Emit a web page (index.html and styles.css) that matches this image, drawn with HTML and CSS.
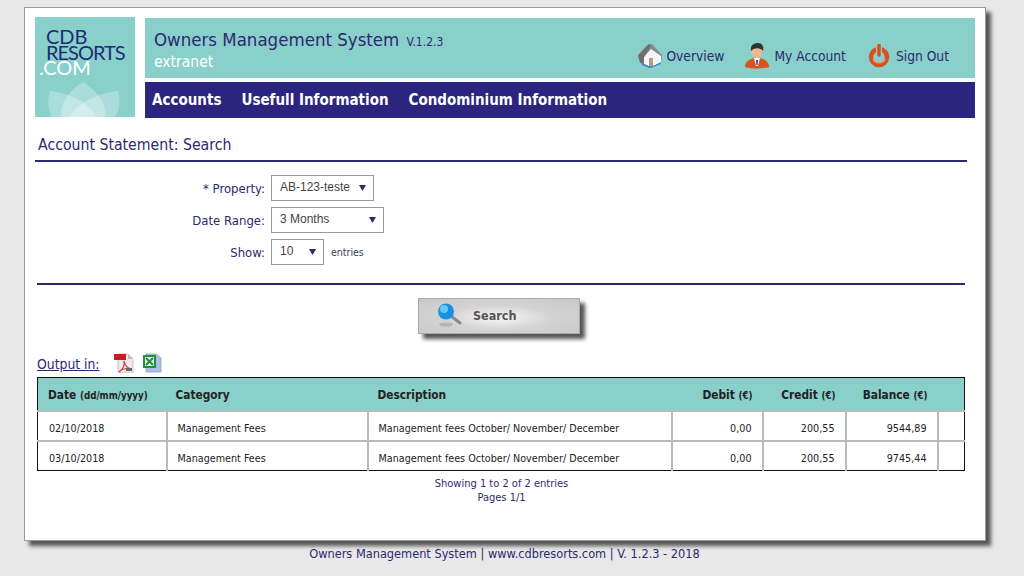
FILE: index.html
```html
<!DOCTYPE html>
<html lang="en">

<head>
  <meta charset="UTF-8">
  <meta name="viewport" content="width=device-width, initial-scale=1.0">
  <title>Owners Management System</title>
  <link rel="stylesheet" href="styles.css">
</head>

<body>
  <div class="sheet">
    <div class="top">
      <div class="logo">
        <div class="logo-text">
          <div>CDB</div>
          <div class="logo-resorts">RESORTS</div>
          <div class="logo-com">.COM</div>
        </div>
        <svg class="logo-petals" width="100" height="38" viewBox="0 0 100 38">
          <path d="M48 3 C36 10 24 24 26 38 H70 C72 24 60 10 48 3Z" fill="#fff" opacity=".28" />
          <path d="M15 12 C12 22 13 32 17 38 H62 C54 24 35 14 15 12Z" fill="#fff" opacity=".28" />
          <path d="M83 12 C86 22 85 32 79 38 H34 C42 24 63 14 83 12Z" fill="#fff" opacity=".28" />
        </svg>
      </div>
      <div class="top-right">
        <div class="banner">
          <div class="banner-title">
            <div class="system-name">Owners Management System <span class="version">V.1.2.3</span></div>
            <div class="extranet">extranet</div>
          </div>
          <div class="quick-links">
            <a class="quick-link link-overview">
              <svg width="26" height="26" viewBox="0 0 26 26">
                <path d="M1 13 L10 2 L15 1 L25 12 L24 20 L13 25 L3 20Z" fill="#8a8a8a" />
                <path d="M7 14 L14 6 L24 13 L24 20 L13 24 L7 21Z" fill="#f4f6f8" />
                <path d="M1 12 L12 1 L14 3 L7 14 L7 21 L3 19Z" fill="#6f6f6f" />
                <path d="M12 15 H16 V23 H12Z" fill="#b79a7a" />
                <path d="M5 20 L12 23 L16 23 L24 19 L24 21 L14 25 L12 25 L5 22Z" fill="#3d8ec4" />
              </svg>
              <span>Overview</span>
            </a>
            <a class="quick-link link-account">
              <svg width="24" height="26" viewBox="0 0 24 26">
                <path d="M0 24 C0 18 6 15 12 15 C18 15 24 18 24 24 C18 26 6 26 0 24Z" fill="#d9541a" />
                <path d="M9 15 H15 L13 23 H11Z" fill="#eef2f6" />
                <path d="M11 17 H13 L12.6 22 H11.4Z" fill="#2f4f7f" />
                <ellipse cx="12" cy="8" rx="5.5" ry="7" fill="#f0b68c" />
                <path d="M6 8 C5 2 9 0 13 0 C17 0 19 3 18 8 C16 5 10 4 6 8Z" fill="#2c3530" />
              </svg>
              <span>My Account</span>
            </a>
            <a class="quick-link link-signout">
              <svg width="22" height="24" viewBox="0 0 22 24">
                <circle cx="11" cy="13" r="8" fill="none" stroke="#d8501f" stroke-width="4.5" />
                <path d="M5 15 A6.5 6.5 0 0 0 17 15" fill="none" stroke="#f0a080" stroke-width="1.2" />
                <path d="M11 2 V11" stroke="#8acfca" stroke-width="6" />
                <path d="M11 1 V11" stroke="#d8501f" stroke-width="3.5" stroke-linecap="round" />
              </svg>
              <span>Sign Out</span>
            </a>
          </div>
        </div>
        <nav class="main-nav">
          <a>Accounts</a>
          <a>Usefull Information</a>
          <a>Condominium Information</a>
        </nav>
      </div>
    </div>

    <h1 class="page-title">Account Statement: Search</h1>

    <form class="search-form">
      <div class="form-row">
        <label class="form-label">* Property:</label>
        <select class="form-select select-property">
          <option>AB-123-teste</option>
        </select>
      </div>
      <div class="form-row">
        <label class="form-label">Date Range:</label>
        <select class="form-select select-range">
          <option>3 Months</option>
        </select>
      </div>
      <div class="form-row">
        <label class="form-label">Show:</label>
        <select class="form-select select-show">
          <option>10</option>
        </select>
        <span class="entries">entries</span>
      </div>
    </form>

    <div class="button-row">
      <button class="search-button" type="button">
        <svg width="26" height="26" viewBox="0 0 26 26">
          <ellipse cx="10" cy="22.5" rx="7" ry="2" fill="#b5b5b5" />
          <path d="M15 14 L24 21" stroke="#8b8b8b" stroke-width="3" stroke-linecap="round" />
          <circle cx="10" cy="9.5" r="8" fill="#1b8fe0" />
          <circle cx="8" cy="7" r="4" fill="#6cc6f7" />
        </svg>
        <span>Search</span>
      </button>
    </div>

    <div class="output-row">
      <a class="output-link">Output in:</a>
      <svg class="output-icon" width="20" height="20" viewBox="0 0 20 20">
        <path d="M4 1 H14 L19 6 V20 H4Z" fill="#eceaea" stroke="#aaa" stroke-width=".7" />
        <path d="M14 1 V6 H19Z" fill="#bdbdbd" />
        <path d="M10 8 C11 13 13 15 17 16 C13 15 8 16 5 19 C9 16 11 12 10 8Z" fill="none" stroke="#d33" stroke-width="1.2" />
        <rect x="0" y="1" width="12" height="6" fill="#d01c1c" />
        <rect x="12" y="15" width="6" height="3" fill="#666" />
      </svg>
      <svg class="output-icon" width="20" height="20" viewBox="0 0 20 20">
        <path d="M4 1 H14 L19 5 V19 H4Z" fill="#a9c0e2" stroke="#7f9bc4" stroke-width=".7" />
        <rect x="1" y="2" width="13" height="13" fill="#1f8f3f" />
        <rect x="3" y="4" width="9" height="9" fill="#e6f2e4" />
        <path d="M4 5 L11 12 M11 5 L4 12" stroke="#1f8f3f" stroke-width="2" />
      </svg>
    </div>

    <table class="statement">
      <colgroup>
        <col class="col-date">
        <col class="col-category">
        <col class="col-description">
        <col class="col-debit">
        <col class="col-credit">
        <col class="col-balance">
        <col>
      </colgroup>
      <thead>
        <tr>
          <th>Date <small>(dd/mm/yyyy)</small></th>
          <th class="th-category">Category</th>
          <th>Description</th>
          <th class="num">Debit <small>(€)</small></th>
          <th class="num">Credit <small>(€)</small></th>
          <th class="num">Balance <small>(€)</small></th>
          <th></th>
        </tr>
      </thead>
      <tbody>
        <tr>
          <td>02/10/2018</td>
          <td>Management Fees</td>
          <td>Management fees October/ November/ December</td>
          <td class="num">0,00</td>
          <td class="num">200,55</td>
          <td class="num">9544,89</td>
          <td></td>
        </tr>
        <tr>
          <td>03/10/2018</td>
          <td>Management Fees</td>
          <td>Management fees October/ November/ December</td>
          <td class="num">0,00</td>
          <td class="num">200,55</td>
          <td class="num">9745,44</td>
          <td></td>
        </tr>
      </tbody>
    </table>

    <div class="table-info">
      <div>Showing 1 to 2 of 2 entries</div>
      <div>Pages 1/1</div>
    </div>
  </div>

  <div class="page-footer">Owners Management System | www.cdbresorts.com | V. 1.2.3 - 2018</div>
</body>

</html>
```

FILE: styles.css
```css
* {
  box-sizing: border-box;
}

html,
body {
  height: 100%;
}

body {
  margin: 0;
  padding-top: 7px;
  background: #e8e8e8;
  color: #2b2a6f;
  font-family: "DejaVu Sans", sans-serif;
  font-stretch: condensed;
  overflow: hidden;
}

.sheet {
  width: 962px;
  height: 534px;
  margin-left: 24px;
  padding: 9px 10px 0 10px;
  background: #fff;
  border: 1px solid #999;
  box-shadow: 5px 5px 4px #555;
}

.top {
  display: flex;
  gap: 10px;
}

.logo {
  display: flex;
  flex-direction: column;
  justify-content: space-between;
  width: 100px;
  height: 100px;
  background: #89d0cb;
}

.logo-text {
  padding: 12px 0 0 11px;
  color: #1f2a78;
  font-family: "Lato", sans-serif;
  font-stretch: normal;
  font-size: 20px;
  line-height: 15.5px;
}

.logo-resorts {
  letter-spacing: -1px;
}

.logo-com {
  margin-left: -7px;
  color: #fff;
}

.logo-petals {
  display: block;
}

.top-right {
  flex: 1;
  padding-top: 1px;
}

.banner {
  display: flex;
  justify-content: space-between;
  height: 60px;
  background: #89d0cb;
  padding: 10px 26px 0 9px;
}

.system-name {
  font-size: 18.5px;
  line-height: 24px;
  white-space: nowrap;
}

.version {
  font-size: 12px;
  margin-left: 2px;
}

.extranet {
  color: #fff;
  font-size: 15.5px;
  line-height: 16px;
}

.quick-links {
  display: flex;
  align-items: center;
  gap: 21px;
  padding-top: 6px;
}

.quick-link {
  display: flex;
  align-items: center;
  font-size: 13.7px;
}

.link-overview svg {
  margin-right: 3px;
}

.link-account svg {
  margin-right: 5px;
}

.link-signout {
  margin-left: 1px;
}

.link-signout svg {
  margin-right: 6px;
}

.main-nav {
  display: flex;
  gap: 20px;
  align-items: center;
  height: 36px;
  margin-top: 4px;
  padding-left: 7px;
  background: #2b2580;
  color: #fff;
  font-size: 15px;
  font-weight: bold;
}

.page-title {
  margin: 17px 0 0 0;
  padding: 0 0 5px 3px;
  border-bottom: 2px solid #2b2a6f;
  width: 932px;
  font-size: 15.7px;
  font-weight: normal;
  line-height: 20px;
}

.search-form {
  width: 928px;
  height: 123px;
  margin-left: 2px;
  padding-top: 13px;
  border-bottom: 2px solid #2b2a6f;
}

.form-row {
  display: flex;
  align-items: center;
  gap: 6px;
  height: 26px;
  margin-bottom: 6px;
}

.form-label {
  width: 228px;
  text-align: right;
  font-size: 13px;
}

.form-select {
  appearance: none;
  height: 26px;
  padding: 0 0 2px 8px;
  border: 1px solid #999;
  border-radius: 0;
  background-color: #fff;
  background-image: url("data:image/svg+xml,%3Csvg xmlns='http://www.w3.org/2000/svg' width='7' height='6'%3E%3Cpath d='M0 0H7L3.5 6Z' fill='%232b2a6f'/%3E%3C/svg%3E");
  background-repeat: no-repeat;
  background-position: right 7px center;
  color: #444;
  font-family: "Liberation Sans", sans-serif;
  font-size: 12px;
}

.select-property {
  width: 103px;
}

.select-range {
  width: 113px;
}

.select-show {
  width: 53px;
}

.entries {
  margin-left: 1px;
  color: #3c3c66;
  font-size: 10.5px;
}

.button-row {
  display: flex;
  justify-content: center;
  width: 928px;
  padding-top: 13px;
}

.search-button {
  display: flex;
  align-items: center;
  gap: 11px;
  width: 162px;
  height: 36px;
  padding: 0 0 2px 17px;
  border: 1px solid #aaa;
  background: radial-gradient(ellipse at 50% 55%, #f6f6f6 0, #d4d4d4 45%, #c8c8c8 100%);
  box-shadow: 5px 5px 4px #555;
  color: #555;
  font-family: "DejaVu Sans", sans-serif;
  font-stretch: condensed;
  font-size: 12.5px;
  font-weight: bold;
}

.output-row {
  display: flex;
  align-items: flex-end;
  gap: 8px;
  height: 25px;
  margin: 18px 0 0 2px;
  padding-bottom: 4px;
}

.output-link {
  margin-right: 6px;
  margin-bottom: 1px;
  font-size: 13.8px;
  text-decoration: underline;
}

.statement {
  table-layout: fixed;
  border-collapse: collapse;
  width: 928px;
  margin-left: 2px;
  border: 1px solid #111;
  color: #222;
}

.col-date {
  width: 129px;
}

.col-category {
  width: 201px;
}

.col-description {
  width: 304px;
}

.col-debit {
  width: 91px;
}

.col-credit {
  width: 83px;
}

.col-balance {
  width: 92px;
}

.statement th {
  height: 33px;
  padding: 2px 10px 0;
  background: #89d0cb;
  text-align: left;
  font-size: 11.8px;
  font-weight: bold;
}

.statement th small {
  font-size: 9.7px;
}

.statement th.th-category {
  padding-left: 9px;
}

.statement th.num {
  text-align: right;
}

.statement td {
  height: 30px;
  padding: 5px 10px 0 10px;
  border-top: 2px solid #bbb;
  border-left: 2px solid #bbb;
  font-size: 10.7px;
}

.statement td:first-child {
  border-left: 0;
  padding-left: 11px;
}

.statement td.num {
  text-align: right;
}

.table-info {
  width: 933px;
  margin-top: 6px;
  text-align: center;
  font-size: 11px;
  line-height: 14px;
}

.page-footer {
  margin-top: 5px;
  margin-right: 15px;
  text-align: center;
  font-size: 12.65px;
  line-height: 16px;
}
```
